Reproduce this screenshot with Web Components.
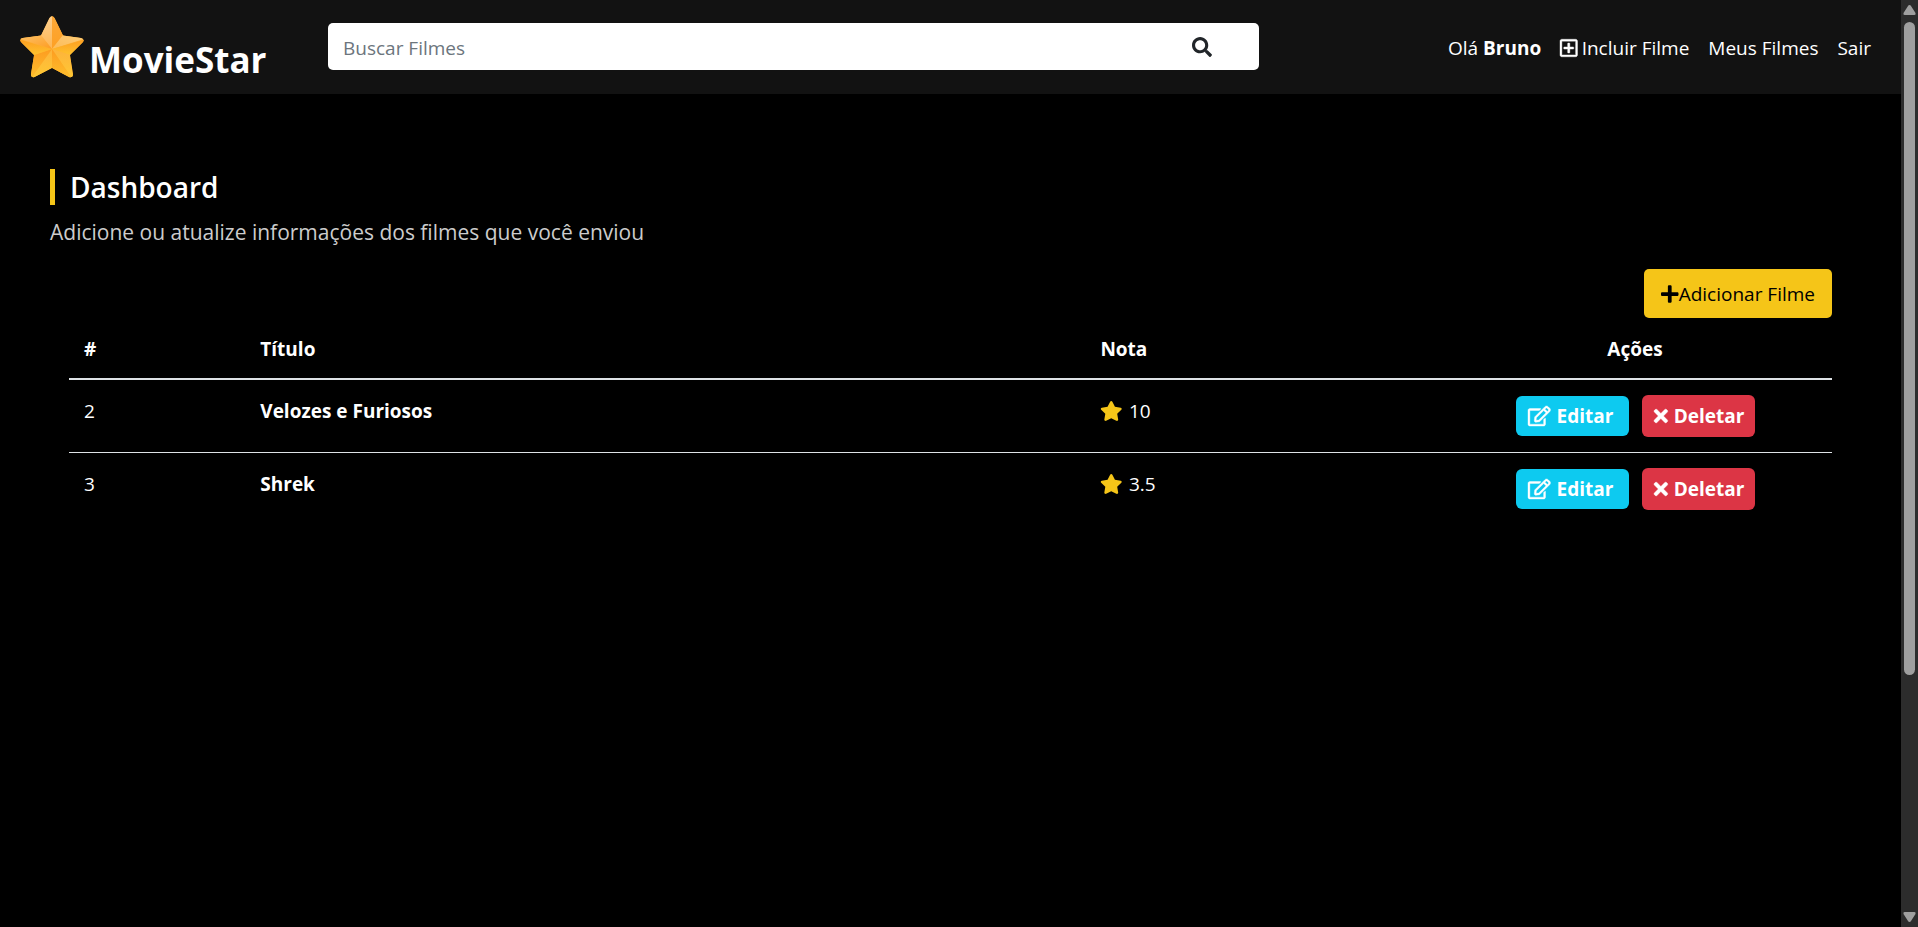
<!DOCTYPE html>
<html lang="pt-BR">
<head>
<meta charset="utf-8">
<title>MovieStar</title>
<style>
html, body { margin: 0; height: 100%; background: #000; }
body { font-family: "Open Sans", "Noto Sans", sans-serif; font-size: 19px; line-height: 30px; color: #fff; }
</style>
</head>
<body>
<movie-app></movie-app>
<script>
const define = (name, html, setup) => {
  const tpl = document.createElement('template');
  tpl.innerHTML = html;
  customElements.define(name, class extends HTMLElement {
    constructor() {
      super();
      this.attachShadow({ mode: 'open' }).append(tpl.content.cloneNode(true));
    }
    connectedCallback() { if (setup) setup(this); }
  });
};

const icons = {
  search: [512, 'M505 442.7L405.3 343c-4.5-4.5-10.6-7-17-7H372c27.6-35.3 44-79.7 44-128C416 93.1 322.9 0 208 0S0 93.1 0 208s93.1 208 208 208c48.3 0 92.7-16.4 128-44v16.3c0 6.4 2.5 12.5 7 17l99.7 99.7c9.4 9.4 24.6 9.4 33.9 0l28.3-28.3c9.4-9.4 9.4-24.6.1-34zM208 336c-70.7 0-128-57.2-128-128 0-70.7 57.2-128 128-128 70.7 0 128 57.2 128 128 0 70.7-57.2 128-128 128z'],
  plusSquare: [448, 'M352 240v32c0 6.6-5.4 12-12 12h-88v88c0 6.6-5.4 12-12 12h-32c-6.6 0-12-5.4-12-12v-88h-88c-6.6 0-12-5.4-12-12v-32c0-6.6 5.4-12 12-12h88v-88c0-6.6 5.4-12 12-12h32c6.6 0 12 5.4 12 12v88h88c6.6 0 12 5.4 12 12zm96-160v352c0 26.5-21.5 48-48 48H48c-26.5 0-48-21.5-48-48V80c0-26.5 21.5-48 48-48h352c26.5 0 48 21.5 48 48zm-48 346V86c0-3.3-2.7-6-6-6H54c-3.3 0-6 2.7-6 6v340c0 3.3 2.7 6 6 6h340c3.3 0 6-2.7 6-6z'],
  plus: [448, 'M416 208H272V64c0-17.67-14.33-32-32-32h-32c-17.67 0-32 14.33-32 32v144H32c-17.67 0-32 14.33-32 32v32c0 17.67 14.33 32 32 32h144v144c0 17.67 14.33 32 32 32h32c17.67 0 32-14.33 32-32V304h144c17.67 0 32-14.33 32-32v-32c0-17.67-14.33-32-32-32z'],
  edit: [576, 'M402.3 344.9l32-32c5-5 13.7-1.5 13.7 5.7V464c0 26.5-21.5 48-48 48H48c-26.5 0-48-21.5-48-48V112c0-26.5 21.5-48 48-48h273.5c7.1 0 10.7 8.6 5.7 13.7l-32 32c-1.5 1.5-3.5 2.3-5.7 2.3H48v352h352V350.5c0-2.1.8-4.1 2.3-5.6zm156.6-201.8L296.3 405.7l-90.4 10c-26.2 2.9-48.5-19.2-45.6-45.6l10-90.4L432.9 17.1c22.9-22.9 59.9-22.9 82.7 0l43.2 43.2c22.9 22.9 22.9 60 .1 82.8zM460.1 174L402 115.9 216.2 301.8l-7.3 65.3 65.3-7.3L460.1 174zm64.8-79.7l-43.2-43.2c-4.1-4.1-10.8-4.1-14.8 0L436 82l58.1 58.1 30.9-30.9c4-4.2 4-10.8-.1-14.9z'],
  times: [352, 'M242.72 256l100.07-100.07c12.28-12.28 12.28-32.19 0-44.48l-22.24-22.24c-12.28-12.28-32.19-12.28-44.48 0L176 189.28 75.93 89.21c-12.28-12.28-32.19-12.28-44.48 0L9.21 111.45c-12.28 12.28-12.28 32.19 0 44.48L109.28 256 9.21 356.07c-12.28 12.28-12.28 32.19 0 44.48l22.24 22.24c12.28 12.28 32.2 12.28 44.48 0L176 322.72l100.07 100.07c12.28 12.28 32.2 12.28 44.48 0l22.24-22.24c12.28-12.28 12.28-32.19 0-44.48L242.72 256z'],
  star: [576, 'M259.3 17.8L194 150.2 47.9 171.5c-26.2 3.8-36.7 36.1-17.7 54.6l105.7 103-25 145.5c-4.5 26.3 23.2 46 46.4 33.7L288 439.6l130.7 68.7c23.2 12.2 50.9-7.4 46.4-33.7l-25-145.5 105.7-103c19-18.5 8.5-50.8-17.7-54.6L382 150.2 316.7 17.8c-11.7-23.6-45.6-23.9-57.4 0z']
};

define('ui-icon', `
<style>
:host { display: block; flex: none; height: 20px; }
svg { display: block; height: 100%; width: auto; fill: currentColor; stroke: currentColor; stroke-width: var(--icon-weight, 0); overflow: visible; }
</style>
<svg aria-hidden="true"><path/></svg>`, el => {
  const [w, d] = icons[el.getAttribute('name')];
  el.shadowRoot.querySelector('svg').setAttribute('viewBox', `0 0 ${w} 512`);
  el.shadowRoot.querySelector('path').setAttribute('d', d);
});

define('brand-logo', `
<style>
:host { display: block; flex: none; }
a { display: flex; align-items: flex-start; gap: 5px; color: #fff; text-decoration: none; font-size: 35px; font-weight: 700; line-height: 54px; }
svg { display: block; width: 64px; height: 62px; }
span { margin-top: 17px; }
</style>
<a href="#">
<svg viewBox="0 0 64 62" aria-hidden="true">
<defs>
<clipPath id="s"><path d="M29.500 2q2.500-3.500 5 0L43 19.500 61 22q4 1 2 4L50 39l3 19q0 4-4 3L32 52 14.500 61q-4 1-3.500-3L14 39 1 26q-2-3 1.500-4L21 19.500z"/></clipPath>
<linearGradient id="a" x1="0" y1="0" x2="0" y2="1"><stop stop-color="#fdd39a"/><stop offset="1" stop-color="#fdb550"/></linearGradient>
<linearGradient id="b" x1="0" y1="0" x2="0" y2="1"><stop stop-color="#fda93a"/><stop offset="1" stop-color="#fda024"/></linearGradient>
<linearGradient id="c" x1="1" y1="0" x2="0" y2="1"><stop stop-color="#fdcd7c"/><stop offset="1" stop-color="#fdbb54"/></linearGradient>
<linearGradient id="d" x1="0" y1="0" x2="0" y2="1"><stop stop-color="#fd9c20"/><stop offset="1" stop-color="#fec22e"/></linearGradient>
<linearGradient id="e" x1="0" y1="0" x2="0" y2="1"><stop stop-color="#fdb33c"/><stop offset="1" stop-color="#ffcb32"/></linearGradient>
<linearGradient id="f" x1="0" y1="0" x2="1" y2="1"><stop stop-color="#fdc36c"/><stop offset="1" stop-color="#fd9c20"/></linearGradient>
</defs>
<g clip-path="url(#s)">
<path fill="#fdb032" d="M0 0h64v62H0z"/>
<path fill="url(#a)" d="M32 33V-4L20 19z"/>
<path fill="url(#b)" d="M32 33V-4L44 19z"/>
<path fill="url(#c)" d="M32 33L43 19l24 3z"/>
<path fill="url(#d)" d="M32 33l35-10-17 16z"/>
<path fill="url(#e)" d="M32 33l18 6 4 27z"/>
<path fill="url(#d)" d="M32 33l22 32-22-13z"/>
<path fill="url(#e)" d="M32 33v19L9 65z"/>
<path fill="url(#d)" d="M32 33L9 65l5-26z"/>
<path fill="url(#d)" d="M32 33l-18 6L-3 23z"/>
<path fill="url(#f)" d="M32 33L-3 22l24-3z"/>
</g></svg><span>MovieStar</span></a>`);

define('search-box', `
<style>
:host { display: block; flex: none; width: calc(50% + 5px); }
form { display: flex; height: 47px; background: #fff; border-radius: 5px; }
input { flex: 1; min-width: 0; border: 0; outline: 0; background: none; padding: 2px 15px 0; font: inherit; color: #212529; }
input::placeholder { color: #6c757d; opacity: 1; }
button { display: flex; align-items: center; border: 0; background: none; padding: 0 47px 0 15px; color: #212529; }
</style>
<form role="search"><input type="text" aria-label="Buscar Filmes" placeholder="Buscar Filmes"><button type="button" aria-label="Buscar"><ui-icon name="search"></ui-icon></button></form>`);

define('nav-link', `
<style>
:host { display: block; }
a { display: flex; align-items: center; gap: 4px; color: #fff; text-decoration: none; white-space: nowrap; }
</style>
<a href="#"><slot></slot></a>`);

define('site-header', `
<style>
:host { display: flex; box-sizing: border-box; height: 94px; padding: 0 30px 0 20px; background: #121212; align-items: flex-start; }
brand-logo { margin-top: 16px; width: 308px; }
search-box { margin-top: 23px; }
nav { display: flex; gap: 19px; margin: 33px 0 0 auto; }
ui-icon { --icon-weight: 10; }
</style>
<brand-logo></brand-logo>
<search-box></search-box>
<nav>
<nav-link><span>Olá <b>Bruno</b></span></nav-link>
<nav-link><ui-icon name="plusSquare"></ui-icon>Incluir Filme</nav-link>
<nav-link>Meus Filmes</nav-link>
<nav-link>Sair</nav-link>
</nav>`);

define('page-title', `
<style>
:host { display: block; }
h2 { margin: 0; padding-left: 15px; border-left: 5px solid #f5c518; font-size: 28px; font-weight: 600; line-height: 36px; }
p { margin: 10px 0 0; color: #ccc; font-size: 21px; line-height: 34px; }
</style>
<h2><slot></slot></h2><p><slot name="lead"></slot></p>`);

define('add-button', `
<style>
:host { display: block; }
button { display: flex; align-items: center; height: 49px; padding: 0 17px; border: 0; border-radius: 5px; background: #f5c518; color: #000; font: inherit; }
</style>
<button type="button"><ui-icon name="plus"></ui-icon><slot></slot></button>`);

define('action-button', `
<style>
:host { display: block; }
button { display: flex; align-items: center; gap: 6px; width: 113px; height: 40px; padding: 0 12px; border: 0; border-radius: 6px; background: #0dcaf0; color: #fff; font: inherit; font-weight: 700; white-space: nowrap; --icon-weight: 10; }
:host([danger]) button { height: 42px; background: #dc3545; }
</style>
<button type="button"><slot></slot></button>`);

define('movie-table', `
<style>
:host { display: block; }
table { width: 100%; border-collapse: collapse; table-layout: fixed; }
th, td { padding: 16px 15px 14px; text-align: left; vertical-align: top; }
thead { border-bottom: 2px solid #dee2e6; }
tbody tr + tr { border-top: 1px solid #dee2e6; }
.id { width: 10%; } .score { width: 20%; } .actions { width: 394px; }
.id, .title, .score, .actions { box-sizing: border-box; }
th.actions { text-align: center; }
td.actions { padding: 15px; }
.rate { display: flex; gap: 6px; align-items: center; }
.rate ui-icon { color: #f5c518; }
.buttons { display: flex; gap: 13px; align-items: center; margin-left: 63px; }
</style>
<table>
<thead><tr><th class="id">#</th><th class="title">Título</th><th class="score">Nota</th><th class="actions">Ações</th></tr></thead>
<tbody></tbody>
</table>`, el => {
  const movies = [[2, 'Velozes e Furiosos', '10'], [3, 'Shrek', '3.5']];
  el.shadowRoot.querySelector('tbody').innerHTML = movies.map(([id, title, score]) => `
<tr><td>${id}</td><td><b>${title}</b></td>
<td><div class="rate"><ui-icon name="star"></ui-icon>${score}</div></td>
<td class="actions"><div class="buttons"><action-button><ui-icon name="edit"></ui-icon>Editar</action-button><action-button danger><ui-icon name="times"></ui-icon>Deletar</action-button></div></td></tr>`).join('');
});

define('scroll-rail', `
<style>
:host { display: flex; flex-direction: column; align-items: center; box-sizing: border-box; width: 17px; padding: 5px 0; background: #2c2c2c; }
svg { display: block; width: 13px; height: 10px; fill: #9f9f9f; }
.track { flex: 1; width: 11px; padding: 7px 0; }
.thumb { height: 74%; border-radius: 6px; background: #9f9f9f; }
</style>
<svg viewBox="0 0 13 10"><path d="M6.500 0q1 0 1.500 1l4.500 7q.5 2-1 2h-10q-1.500 0-1-2L5 1q.5-1 1.500-1z"/></svg>
<div class="track"><div class="thumb"></div></div>
<svg viewBox="0 0 13 10"><path d="M6.500 10q1 0 1.500-1l4.500-7q.5-2-1-2h-10q-1.500 0-1 2L5 9q.5 1 1.500 1z"/></svg>`);

define('movie-app', `
<style>
:host { display: flex; min-height: 100vh; }
.page { flex: 1; min-width: 0; }
main { padding: 75px 50px; }
.list { margin: 20px 19px 0; }
.tools { display: flex; justify-content: flex-end; }
</style>
<div class="page">
<site-header></site-header>
<main>
<page-title>Dashboard<span slot="lead">Adicione ou atualize informações dos filmes que você enviou</span></page-title>
<div class="list"><div class="tools"><add-button>Adicionar Filme</add-button></div><movie-table></movie-table></div>
</main>
</div>
<scroll-rail></scroll-rail>`);
</script>
</body>
</html>
